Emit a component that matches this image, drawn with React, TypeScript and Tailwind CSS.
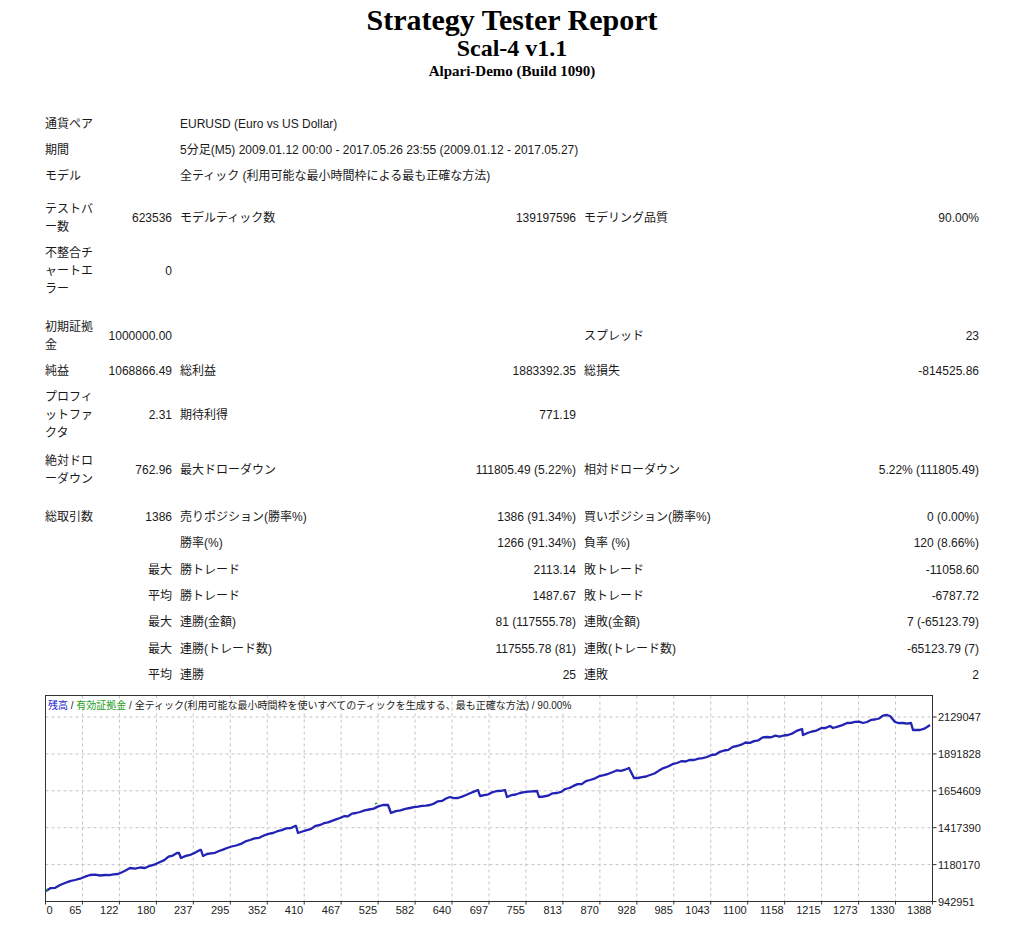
import React from "react";

type Cell = React.ReactNode;

const Row = ({
  a,
  b,
  c,
  d,
  e,
  f,
  wide,
  tall,
}: {
  a?: Cell;
  b?: Cell;
  c?: Cell;
  d?: Cell;
  e?: Cell;
  f?: Cell;
  wide?: Cell;
  tall?: boolean;
}) => (
  <div className={"flex items-center leading-[18px] " + (tall ? "h-[26.3px]" : "py-1")}>
    <div className="w-[59px] shrink-0">{a}</div>
    {wide ? (
      <div className="pl-[76px]">{wide}</div>
    ) : (
      <>
        <div className="w-[68px] shrink-0 text-right whitespace-nowrap">{b}</div>
        <div className="ml-2 flex w-[396px] shrink-0 justify-between whitespace-nowrap">
          <span>{c}</span>
          <span>{d}</span>
        </div>
        <div className="ml-2 flex w-[395px] shrink-0 justify-between whitespace-nowrap">
          <span>{e}</span>
          <span>{f}</span>
        </div>
      </>
    )}
  </div>
);

// rough equity curve, page coordinates read off the report
const curve: [number, number][] = [
  [46, 891], [60, 885], [75, 880], [90, 875], [105, 875], [118, 874],
  [130, 868], [145, 868], [160, 862], [177, 853], [179, 853], [181, 858],
  [200, 850], [201, 850], [203, 856], [227, 848], [250, 840], [273, 833],
  [295, 826], [296, 826], [298, 833], [320, 825], [340, 818], [360, 812],
  [383, 805], [388, 805], [391, 813], [410, 808], [430, 805], [450, 797],
  [458, 798], [478, 790], [480, 796], [497, 791], [505, 790], [507, 797],
  [520, 793], [537, 791], [539, 797], [557, 793], [590, 780], [613, 772],
  [629, 768], [634, 778], [650, 775], [677, 763], [707, 757], [737, 746],
  [767, 737], [788, 735], [802, 729], [803, 735], [830, 726], [833, 728],
  [847, 723], [867, 722], [887, 715], [890, 716], [895, 722], [903, 723],
  [911, 723], [913, 730], [920, 730], [930, 725],
];

// add small steps so the line looks like a trade-by-trade balance
const jagged = () => {
  let seed = 7;
  const rnd = () => {
    seed = (seed * 16807) % 2147483647;
    return seed / 2147483647;
  };
  const out: [number, number][] = [curve[0]];
  for (let i = 1; i < curve.length; i++) {
    const [x0, y0] = curve[i - 1];
    const [x1, y1] = curve[i];
    const n = Math.floor((x1 - x0) / 4);
    for (let k = 1; k < n; k++) {
      const t = k / n;
      const x = x0 + (x1 - x0) * t;
      const y = y0 + (y1 - y0) * t + (rnd() - 0.5) * 1.8;
      out.push([x, y]);
    }
    out.push([x1, y1]);
  }
  return out;
};

const xLabels = [
  "0", "65", "122", "180", "237", "295", "352", "410", "467", "525", "582",
  "640", "697", "755", "813", "870", "928", "985", "1043", "1100", "1158",
  "1215", "1273", "1330", "1388",
];
const yLabels = ["942951", "1180170", "1417390", "1654609", "1891828", "2129047"];

const Chart = () => {
  const left = 5.5;
  const right = 892.5;
  const top = 5.5;
  const bottom = 211.5;
  const dx = (right - left) / 24;
  const dy = (bottom - 27) / 5;
  const pts = jagged()
    .map(([x, y]) => `${(x - 40).toFixed(1)},${(y - 690).toFixed(1)}`)
    .join(" ");
  return (
    <svg
      width="960"
      height="236"
      viewBox="0 0 960 236"
      className="ml-[40px] block font-['Liberation_Sans','Noto_Sans_CJK_JP',sans-serif]"
    >
      <rect x={left} y={top} width={right - left} height={bottom - top} fill="#fff" />
      {Array.from({ length: 23 }, (_, i) => {
        const x = left + dx * (i + 1);
        return (
          <line key={"v" + i} x1={x} y1={top} x2={x} y2={bottom} stroke="#c4c4c4" strokeDasharray="3 3" />
        );
      })}
      {Array.from({ length: 5 }, (_, i) => {
        const y = bottom - dy * (i + 1);
        return (
          <line key={"h" + i} x1={left} y1={y} x2={right} y2={y} stroke="#c4c4c4" strokeDasharray="3 3" />
        );
      })}
      <rect x={left} y={top} width={right - left} height={bottom - top} fill="none" stroke="#333" />
      {Array.from({ length: 25 }, (_, i) => {
        const x = left + dx * i;
        return <line key={"tx" + i} x1={x} y1={bottom} x2={x} y2={bottom + 3} stroke="#333" />;
      })}
      {yLabels.map((l, i) => {
        const y = bottom - dy * i;
        return (
          <g key={l}>
            <line x1={right} y1={y} x2={right + 4} y2={y} stroke="#333" />
            <text x={898} y={y + 4} fontSize="11" fill="#222">
              {l}
            </text>
          </g>
        );
      })}
      {xLabels.map((l, i) => {
        const x = left + dx * i;
        return (
          <text
            key={l}
            x={i === 0 ? x + 1 : x - 1}
            y={224}
            fontSize="11"
            fill="#222"
            textAnchor={i === 0 ? "start" : "end"}
          >
            {l}
          </text>
        );
      })}
      <text x={8} y={19} fontSize="10" fill="#222">
        <tspan fill="#1a1ad0">残高</tspan>
        <tspan> / </tspan>
        <tspan fill="#1ea01e">有効証拠金</tspan>
        <tspan> / 全ティック(利用可能な最小時間枠を使いすべてのティックを生成する、最も正確な方法) / 90.00%</tspan>
      </text>
      <polyline points={pts} fill="none" stroke="#2222b4" strokeWidth="2.3" strokeLinejoin="round" />
      <line x1={335} y1={114} x2={337} y2={113} stroke="#2ca02c" strokeWidth="1.5" />
      <line x1={6} y1={200} x2={8} y2={199} stroke="#2ca02c" strokeWidth="1.5" />
    </svg>
  );
};

export default function App() {
  return (
    <div className="h-[926px] w-[1024px] bg-white text-[12px] text-[#1a1a1a] font-['Liberation_Sans','Noto_Sans_CJK_JP',sans-serif]">
      <div className="pt-[4px] text-center font-['Liberation_Serif',serif] font-bold text-black">
        <h1 className="text-[30px] leading-[32px]">Strategy Tester Report</h1>
        <h2 className="text-[24px] leading-[24px]">Scal-4 v1.1</h2>
        <h3 className="text-[15px] leading-[22px]">Alpari-Demo (Build 1090)</h3>
      </div>

      <div className="ml-[45px] mt-[29px] w-[934px]">
        <Row a="通貨ペア" wide="EURUSD (Euro vs US Dollar)" />
        <Row a="期間" wide="5分足(M5) 2009.01.12 00:00 - 2017.05.26 23:55 (2009.01.12 - 2017.05.27)" />
        <Row a="モデル" wide="全ティック (利用可能な最小時間枠による最も正確な方法)" />
        <div className="h-[7px]" />
        <Row
          a={<>テストバ<br />ー数</>}
          b="623536"
          c="モデルティック数"
          d="139197596"
          e="モデリング品質"
          f="90.00%"
        />
        <Row a={<>不整合チ<br />ャートエ<br />ラー</>} b="0" />
        <div className="h-[12px]" />
        <Row a={<>初期証拠<br />金</>} b="1000000.00" e="スプレッド" f="23" />
        <Row a="純益" b="1068866.49" c="総利益" d="1883392.35" e="総損失" f="-814525.86" />
        <Row a={<>プロフィ<br />ットファ<br />クタ</>} b="2.31" c="期待利得" d="771.19" />
        <div className="h-[2px]" />
        <Row
          a={<>絶対ドロ<br />ーダウン</>}
          b="762.96"
          c="最大ドローダウン"
          d="111805.49 (5.22%)"
          e="相対ドローダウン"
          f="5.22% (111805.49)"
        />
        <div className="h-[12px]" />
        <Row tall a="総取引数" b="1386" c="売りポジション(勝率%)" d="1386 (91.34%)" e="買いポジション(勝率%)" f="0 (0.00%)" />
        <Row tall c="勝率(%)" d="1266 (91.34%)" e="負率 (%)" f="120 (8.66%)" />
        <Row tall b="最大" c="勝トレード" d="2113.14" e="敗トレード" f="-11058.60" />
        <Row tall b="平均" c="勝トレード" d="1487.67" e="敗トレード" f="-6787.72" />
        <Row tall b="最大" c="連勝(金額)" d="81 (117555.78)" e="連敗(金額)" f="7 (-65123.79)" />
        <Row tall b="最大" c="連勝(トレード数)" d="117555.78 (81)" e="連敗(トレード数)" f="-65123.79 (7)" />
        <Row tall b="平均" c="連勝" d="25" e="連敗" f="2" />
      </div>

      <div className="mt-[2px]">
        <Chart />
      </div>
    </div>
  );
}
